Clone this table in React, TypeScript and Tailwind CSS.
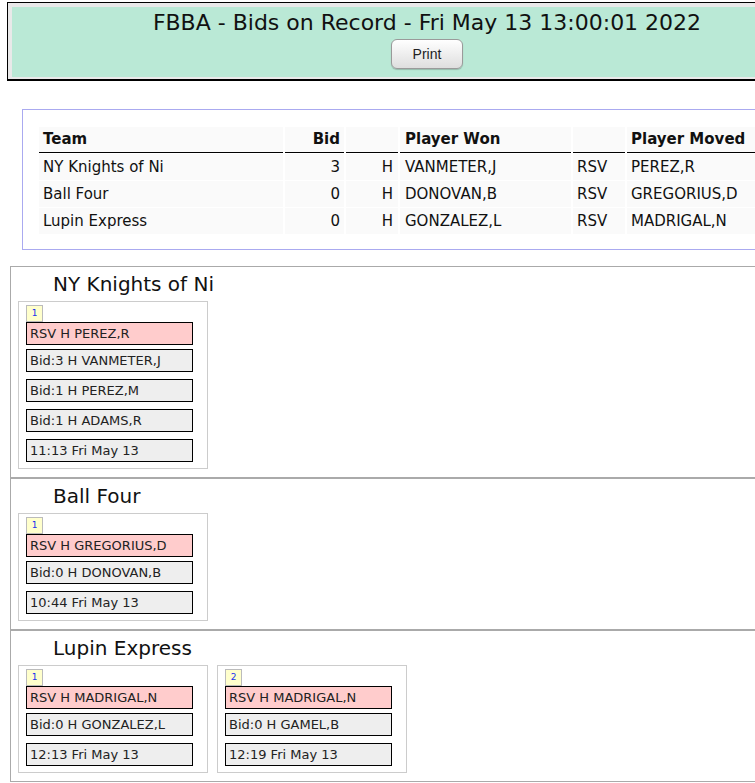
import React from 'react';

const font = { fontFamily: '"DejaVu Sans", Verdana, sans-serif' };

const bids = [
    { team: 'NY Knights of Ni', bid: 3, won: 'VANMETER,J', moved: 'PEREZ,R' },
    { team: 'Ball Four', bid: 0, won: 'DONOVAN,B', moved: 'GREGORIUS,D' },
    { team: 'Lupin Express', bid: 0, won: 'GONZALEZ,L', moved: 'MADRIGAL,N' },
];

type Card = { rsv: string; lines: string[]; time: string };

const teams: { name: string; cards: Card[] }[] = [
    {
        name: 'NY Knights of Ni',
        cards: [{ rsv: 'RSV H PEREZ,R', lines: ['Bid:3 H VANMETER,J', 'Bid:1 H PEREZ,M', 'Bid:1 H ADAMS,R'], time: '11:13 Fri May 13' }],
    },
    {
        name: 'Ball Four',
        cards: [{ rsv: 'RSV H GREGORIUS,D', lines: ['Bid:0 H DONOVAN,B'], time: '10:44 Fri May 13' }],
    },
    {
        name: 'Lupin Express',
        cards: [
            { rsv: 'RSV H MADRIGAL,N', lines: ['Bid:0 H GONZALEZ,L'], time: '12:13 Fri May 13' },
            { rsv: 'RSV H MADRIGAL,N', lines: ['Bid:0 H GAMEL,B'], time: '12:19 Fri May 13' },
        ],
    },
];

const BidCard = ({ card, n }: { card: Card; n: number }) => (
    <div className="w-[190px] border border-[#cccccc] pt-[3px] pl-[7px] pr-[14px] pb-[6px] bg-white">
        <div className="w-[17px] h-[17px] border border-[#bbbbbb] bg-[#ffffcc] flex items-center justify-center text-[9px] leading-none text-[#2233ee]">
            {n}
        </div>
        <div className="h-[23px] border border-black bg-[#ffcccc] px-[3px] flex items-center text-[13px] text-[#222] mb-[4px]">
            {card.rsv}
        </div>
        {card.lines.map((l, i) => (
            <div key={i} className="h-[23px] border border-black bg-[#eeeeee] px-[3px] flex items-center text-[13px] text-[#222] mb-[7px]">
                {l}
            </div>
        ))}
        <div className="h-[23px] border border-black bg-[#eeeeee] px-[3px] flex items-center text-[13px] text-[#222]">
            {card.time}
        </div>
    </div>
);

export default function App() {
    return (
        <div className="w-[755px] h-[783px] overflow-hidden bg-white text-black" style={font}>
            <div className="w-[860px]">
                <div className="w-[840px] ml-[7px] mt-[2px] border border-black border-b-2 bg-[#e9e9e9] pt-[4px] pl-[4px] pr-[4px] pb-[2px]">
                    <div className="h-[70px] bg-[#bae9d6] flex flex-col items-center pt-[4px]">
                        <div className="text-[22px] leading-[24px] text-[#111] whitespace-nowrap">FBBA - Bids on Record - Fri May 13 13:00:01 2022</div>
                        <button
                            className="mt-[4px] w-[72px] h-[30px] rounded-[6px] border border-[#9a9a9a] bg-gradient-to-b from-white to-[#dedede] shadow-[0_1px_1px_rgba(0,0,0,0.2)] text-[14px] text-[#222]"
                            style={{ fontFamily: '"Liberation Sans", Arial, sans-serif' }}
                        >
                            Print
                        </button>
                    </div>
                </div>

                <div className="mt-[28px] ml-[22px] w-[810px] border border-[#aaaaf0] px-[14px] pt-[16px] pb-[14px]">
                    <table className="border-separate border-spacing-x-[2px] border-spacing-y-[1px] text-[15px] text-[#111]">
                        <thead>
                            <tr className="h-[26px] bg-[#fafafa]">
                                <th className="w-[244px] text-left font-bold px-[4px] border-b border-black">Team</th>
                                <th className="w-[59px] text-right font-bold px-[4px] border-b border-black">Bid</th>
                                <th className="w-[52px] border-b border-black"></th>
                                <th className="w-[171px] text-left font-bold px-[5px] border-b border-black">Player Won</th>
                                <th className="w-[52px] border-b border-black"></th>
                                <th className="w-[180px] text-left font-bold px-[4px] border-b border-black">Player Moved</th>
                            </tr>
                        </thead>
                        <tbody>
                            {bids.map((b) => (
                                <tr key={b.team} className="h-[26px] bg-[#fafafa]">
                                    <td className="px-[4px]">{b.team}</td>
                                    <td className="px-[4px] text-right">{b.bid}</td>
                                    <td className="px-[5px] text-right">H</td>
                                    <td className="px-[5px]">{b.won}</td>
                                    <td className="px-[4px]">RSV</td>
                                    <td className="px-[4px]">{b.moved}</td>
                                </tr>
                            ))}
                        </tbody>
                    </table>
                </div>

                <div className="mt-[16px] ml-[10px]">
                    {teams.map((t) => (
                        <div key={t.name} className="border border-[#aaaaaa] pt-[5px] pb-[8px] pl-[7px]">
                            <div className="pl-[35px] text-[20px] leading-[24px] mb-[5px] text-[#111]">{t.name}</div>
                            <div className="flex gap-[9px]">
                                {t.cards.map((c, i) => (
                                    <BidCard key={i} card={c} n={i + 1} />
                                ))}
                            </div>
                        </div>
                    ))}
                </div>
            </div>
        </div>
    );
}
